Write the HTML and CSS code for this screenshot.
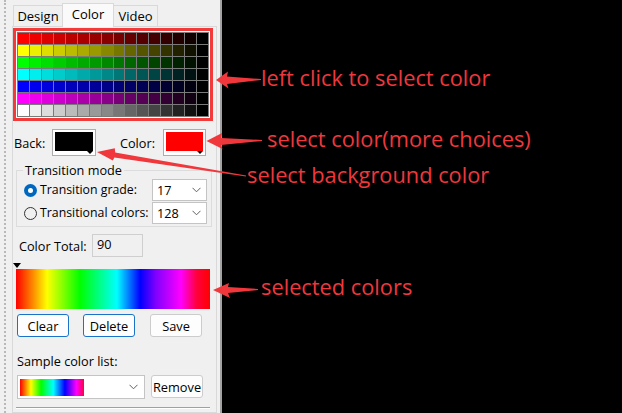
FILE: index.html
```html
<!DOCTYPE html>
<html>
<head>
<meta charset="utf-8">
<title>Color</title>
<link rel="stylesheet" href="styles.css">
</head>
<body>
<div class="app">
  <aside class="side">
    <div class="gutter"></div>
    <div class="tabs">
      <div class="tabbar">
        <div class="tab">Design</div>
        <div class="tab active">Color</div>
        <div class="tab">Video</div>
      </div>
      <div class="page">
        <div class="palette">
          <div class="prow r-red"><i></i><i></i><i></i><i></i><i></i><i></i><i></i><i></i><i></i><i></i><i></i><i></i><i></i><i></i><i></i><i></i></div>
          <div class="prow r-yellow"><i></i><i></i><i></i><i></i><i></i><i></i><i></i><i></i><i></i><i></i><i></i><i></i><i></i><i></i><i></i><i></i></div>
          <div class="prow r-green"><i></i><i></i><i></i><i></i><i></i><i></i><i></i><i></i><i></i><i></i><i></i><i></i><i></i><i></i><i></i><i></i></div>
          <div class="prow r-cyan"><i></i><i></i><i></i><i></i><i></i><i></i><i></i><i></i><i></i><i></i><i></i><i></i><i></i><i></i><i></i><i></i></div>
          <div class="prow r-blue"><i></i><i></i><i></i><i></i><i></i><i></i><i></i><i></i><i></i><i></i><i></i><i></i><i></i><i></i><i></i><i></i></div>
          <div class="prow r-magenta"><i></i><i></i><i></i><i></i><i></i><i></i><i></i><i></i><i></i><i></i><i></i><i></i><i></i><i></i><i></i><i></i></div>
          <div class="prow r-gray"><i></i><i></i><i></i><i></i><i></i><i></i><i></i><i></i><i></i><i></i><i></i><i></i><i></i><i></i><i></i><i></i></div>
        </div>

        <div class="pick-row">
          <span class="lbl lbl-back">Back:</span>
          <div class="swatch sw-back"><span class="fill fill-black"></span><span class="caret"></span></div>
          <span class="lbl lbl-color">Color:</span>
          <div class="swatch sw-color"><span class="fill fill-red"></span><span class="caret"></span></div>
        </div>

        <fieldset class="group">
          <legend>Transition mode</legend>
          <div class="opt">
            <span class="radio on"></span>
            <span class="opt-lbl">Transition grade:</span>
            <div class="combo small">
              <span class="val">17</span>
              <svg class="chev" width="9" height="6" viewBox="0 0 9 6"><polyline points="0.5,0.8 4.5,4.8 8.5,0.8" fill="none" stroke="#606060" stroke-width="1"/></svg>
            </div>
          </div>
          <div class="opt">
            <span class="radio"></span>
            <span class="opt-lbl">Transitional colors:</span>
            <div class="combo small">
              <span class="val">128</span>
              <svg class="chev" width="9" height="6" viewBox="0 0 9 6"><polyline points="0.5,0.8 4.5,4.8 8.5,0.8" fill="none" stroke="#606060" stroke-width="1"/></svg>
            </div>
          </div>
        </fieldset>

        <div class="total">
          <span class="total-lbl">Color Total:</span>
          <div class="field">90</div>
        </div>

        <div class="marker"></div>
        <div class="spectrum"></div>

        <div class="btns">
          <button class="btn focus">Clear</button>
          <button class="btn focus">Delete</button>
          <button class="btn save">Save</button>
        </div>

        <div class="sample-lbl">Sample color list:</div>
        <div class="sample-row">
          <div class="combo wide">
            <span class="mini"></span>
            <svg class="chev" width="9" height="6" viewBox="0 0 9 6"><polyline points="0.5,0.8 4.5,4.8 8.5,0.8" fill="none" stroke="#606060" stroke-width="1"/></svg>
          </div>
          <button class="btn remove">Remove</button>
        </div>
        <div class="sep"></div>
      </div>
    </div>
  </aside>
  <main class="canvas"></main>

  <svg class="arrows" width="622" height="413" viewBox="0 0 622 413">
    <polygon points="216,80 228,71.5 227,76.5 261,79 261,80 227,84 228.5,88.5" fill="#f0373c"/>
    <polygon points="206.5,141 222,133 221,138 262,140 262,141 221,145 222.5,149" fill="#f0373c"/>
    <polygon points="97,152 114.8,148.3 115.2,152.4 246.1,175.5 245.9,176.5 114.4,157.4 112.8,160.6" fill="#f0373c"/>
    <polygon points="213,290 229,283 228,287 258,289 258,290 228,293 230,298" fill="#f0373c"/>
  </svg>
  <div class="note n1">left click to select color</div>
  <div class="note n2">select color(more choices)</div>
  <div class="note n3">select background color</div>
  <div class="note n4">selected colors</div>
</div>
</body>
</html>
```

FILE: styles.css
```css
* { box-sizing: border-box; }
html, body { margin: 0; padding: 0; }
body {
  width: 622px;
  height: 413px;
  overflow: hidden;
  font-family: "Open Sans", "Noto Sans", sans-serif;
  font-size: 12.7px;
  color: #000;
}
.app {
  position: relative;
  display: flex;
  width: 622px;
  height: 413px;
  background: #f0f0f0;
}
.side {
  width: 222px;
  height: 413px;
  display: flex;
  border-right: 2px solid #a3a3a3;
  background: #f0f0f0;
}
.gutter {
  margin-left: 4px;
  width: 8px;
  height: 413px;
  border-left: 2px dotted #b9b9b9;
}
.tabs {
  width: 205px;
  margin-top: 3px;
  display: flex;
  flex-direction: column;
}
.tabbar {
  height: 24px;
  display: flex;
  align-items: flex-end;
  padding-left: 1px;
}
.tab {
  height: 21px;
  padding: 0;
  border: 1px solid #d9d9d9;
  border-bottom: none;
  background: #f0f0f0;
  display: flex;
  align-items: center;
  justify-content: center;
  font-size: 13px;
  line-height: 16px;
  margin-bottom: 1px;
}
.tab:nth-child(1) { width: 50px; }
.tab:nth-child(2) { width: 52px; margin-left: -1px; }
.tab:nth-child(3) { width: 45px; margin-left: -1px; }
.tab.active {
  height: 24px;
  background: #fafafa;
  margin-bottom: 0;
  padding-bottom: 3px;
  position: relative;
  z-index: 1;
}
.page {
  flex: 1;
  border: 1px solid #d9d9d9;
  margin-top: -1px;
  background: #f0f0f0;
}

/* palette */
.palette {
  margin-top: 1px;
  width: 200px;
  height: 93px;
  border: 3px solid #f23a3a;
  padding: 2px;
  display: flex;
  flex-direction: column;
  gap: 1px;
  background: #fff;
}
.prow {
  flex: 1;
  display: flex;
  gap: 1px;
  background: #7a7a7a;
  outline: 1px solid #7a7a7a;
}
.prow i { flex: 1; display: block; }
.prow i:nth-child(1) { --v: 255; }
.prow i:nth-child(2) { --v: 238; }
.prow i:nth-child(3) { --v: 221; }
.prow i:nth-child(4) { --v: 204; }
.prow i:nth-child(5) { --v: 187; }
.prow i:nth-child(6) { --v: 170; }
.prow i:nth-child(7) { --v: 153; }
.prow i:nth-child(8) { --v: 136; }
.prow i:nth-child(9) { --v: 119; }
.prow i:nth-child(10) { --v: 102; }
.prow i:nth-child(11) { --v: 85; }
.prow i:nth-child(12) { --v: 68; }
.prow i:nth-child(13) { --v: 51; }
.prow i:nth-child(14) { --v: 34; }
.prow i:nth-child(15) { --v: 17; }
.prow i:nth-child(16) { --v: 0; }
.r-red i { background: rgb(var(--v), 0, 0); }
.r-yellow i { background: rgb(var(--v), var(--v), 0); }
.r-green i { background: rgb(0, var(--v), 0); }
.r-cyan i { background: rgb(0, var(--v), var(--v)); }
.r-blue i { background: rgb(0, 0, var(--v)); }
.r-magenta i { background: rgb(var(--v), 0, var(--v)); }
.r-gray i { background: rgb(var(--v), var(--v), var(--v)); }

/* back / color */
.pick-row {
  margin-top: 8px;
  height: 27px;
  display: flex;
  align-items: center;
  padding-left: 1px;
}
.lbl { font-size: 12.7px; line-height: 16px; }
.lbl-back { width: 38px; }
.lbl-color { width: 43px; margin-left: 24px; }
.swatch {
  position: relative;
  height: 27px;
  border: 1px solid #adadad;
  background: #fff;
  padding: 2px 2px 4px 2px;
}
.sw-back { width: 44px; }
.sw-color { width: 43px; }
.fill { display: block; width: 100%; height: 100%; }
.fill-black { background: #000; }
.fill-red { background: #ff0000; }
.caret {
  position: absolute;
  right: 2px;
  bottom: 1px;
  width: 0;
  height: 0;
  border-left: 3px solid transparent;
  border-right: 3px solid transparent;
  border-top: 3px solid #000;
}

/* group */
.group {
  margin: 7px 0 0 3px;
  width: 196px;
  padding: 0 0 2px 0;
  border: 1px solid #dcdcdc;
}
.group legend {
  margin-left: 6px;
  padding: 0 2px;
  font-size: 12.7px;
  line-height: 14px;
}
.opt {
  height: 22px;
  display: flex;
  align-items: center;
  margin-top: 1px;
}
.opt:first-of-type { margin-top: 2px; }
.radio {
  width: 13px;
  height: 13px;
  margin-left: 7px;
  border-radius: 50%;
  border: 1px solid #333;
  background: transparent;
  display: flex;
  align-items: center;
  justify-content: center;
}
.radio.on {
  border: none;
  background: #0067c0;
}
.radio.on::after {
  content: "";
  width: 5px;
  height: 5px;
  border-radius: 50%;
  background: #fff;
}
.opt-lbl {
  width: 115px;
  padding-left: 3px;
  font-size: 12.3px;
  line-height: 16px;
  white-space: nowrap;
}
.combo {
  height: 22px;
  border: 1px solid #c4c4c4;
  background: #fff;
  display: flex;
  align-items: center;
  justify-content: space-between;
  padding: 0 5px 0 4px;
}
.combo.small { width: 55px; }
.combo .val { font-size: 12.7px; line-height: 16px; }
.chev { display: block; }

/* total */
.total {
  margin-top: 7px;
  height: 23px;
  display: flex;
  align-items: center;
  padding-left: 6px;
}
.total-lbl { width: 73px; font-size: 12.7px; line-height: 16px; }
.field {
  width: 51px;
  height: 23px;
  border: 1px solid #cfcfcf;
  background: #f0f0f0;
  padding: 1px 0 0 4px;
  font-size: 12.7px;
  line-height: 16px;
}

.marker {
  margin-top: 6px;
  margin-left: 0;
  width: 0;
  height: 0;
  border-left: 4.5px solid transparent;
  border-right: 4.5px solid transparent;
  border-top: 5px solid #000;
}
.spectrum {
  margin-top: 1px;
  margin-left: 3px;
  width: 194px;
  height: 40px;
  background: linear-gradient(to right,
    #ff0000 0%, #ff7f00 8%, #ffff00 16%, #00ff00 33%, #00ffff 52%,
    #0000ff 64%, #8000ff 72%, #ff00ff 85%, #ff0040 93%, #ff0000 100%);
}

.btns {
  margin-top: 5px;
  margin-left: 4px;
  display: flex;
  gap: 14px;
}
.btn {
  width: 52px;
  height: 23px;
  padding: 0;
  border: 1px solid #cccccc;
  border-radius: 3px;
  background: #fdfdfd;
  font-family: "Open Sans", "Noto Sans", sans-serif;
  font-size: 12.8px;
  line-height: 16px;
  color: #000;
}
.btn.focus { border-color: #1a73c8; }
.btn.save { margin-left: 1px; }

.sample-lbl {
  margin-top: 16px;
  padding-left: 4px;
  font-size: 12.7px;
  line-height: 16px;
}
.sample-row {
  margin-top: 6px;
  margin-left: 4px;
  display: flex;
  align-items: flex-start;
  gap: 6px;
}
.combo.wide {
  width: 128px;
  height: 24px;
  padding: 0 6px 0 2px;
}
.mini {
  width: 64px;
  height: 17px;
  background: linear-gradient(to right,
    #ff0000 0%, #ffff00 17%, #00ff00 33%, #00ffff 52%, #0000ff 70%, #ff00ff 88%, #ff0040 100%);
}
.btn.remove { margin-top: 0; }
.sep {
  margin-top: 8px;
  margin-left: 3px;
  width: 194px;
  height: 2px;
  border-top: 1px solid #a0a0a0;
  border-bottom: 1px solid #fff;
}

.canvas {
  flex: 1;
  background: #000;
}

/* annotations */
.arrows {
  position: absolute;
  left: 0;
  top: 0;
  pointer-events: none;
}
.note {
  position: absolute;
  font-family: "Open Sans", "Noto Sans", sans-serif;
  font-size: 21.8px;
  line-height: 24px;
  color: #f0373c;
  white-space: nowrap;
}
.n1 { left: 261px; top: 66px; }
.n2 { left: 267px; top: 127px; }
.n3 { left: 247px; top: 163px; }
.n4 { left: 261px; top: 275px; }
```
